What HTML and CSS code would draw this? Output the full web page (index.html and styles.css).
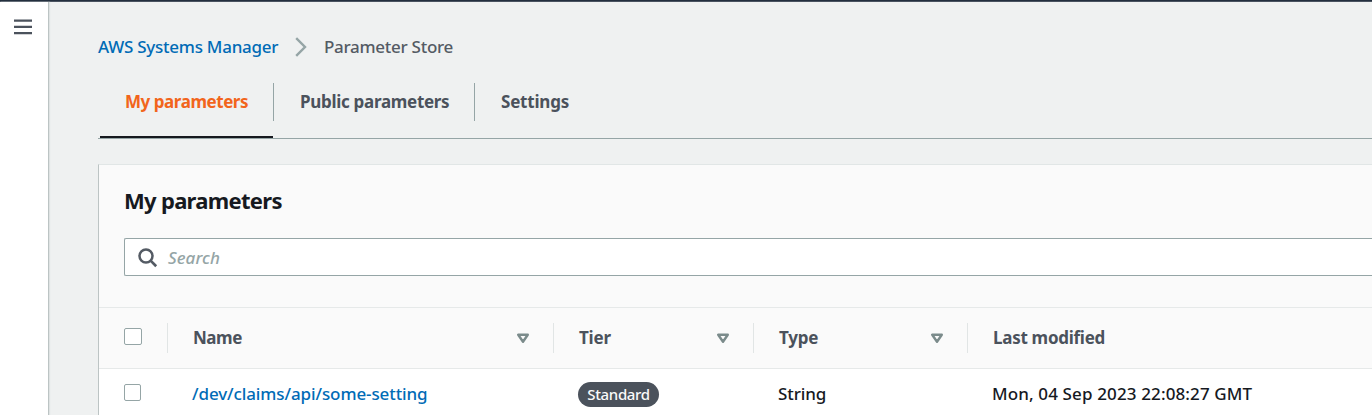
FILE: index.html
```html
<!DOCTYPE html>
<html lang="en">
<head>
<meta charset="utf-8">
<title>AWS Systems Manager - Parameter Store</title>
<link rel="stylesheet" href="styles.css">
</head>
<body>
<div class="topbar"></div>
<div class="layout">
  <aside class="rail">
    <svg class="menu" width="18" height="16" viewBox="0 0 18 16"><path d="M0 1.6h18M0 7.9h18M0 14.1h18" stroke="#4b525c" stroke-width="2.3"/></svg>
  </aside>
  <main class="main">
    <nav class="crumbs">
      <a class="crumb link t-home">AWS Systems Manager</a>
      <svg class="chevron" width="12" height="20" viewBox="0 0 12 20"><path d="M1.2 1.2 10 10 1.2 18.8" fill="none" stroke="#95a5a6" stroke-width="2.4"/></svg>
      <span class="crumb t-store">Parameter Store</span>
    </nav>
    <div class="tabs">
      <div class="tab active"><span class="t-tab1">My parameters</span></div>
      <div class="tab second"><span class="t-tab2">Public parameters</span></div>
      <div class="tab last"><span class="t-tab3">Settings</span></div>
    </div>
    <section class="card">
      <header class="card-head">
        <h2 class="title">My parameters</h2>
        <div class="search">
          <svg width="20" height="20" viewBox="0 0 20 20"><circle cx="8" cy="8" r="6.5" fill="none" stroke="#545b64" stroke-width="2.5"/><path d="m12.6 12.6 5.6 5.6" stroke="#545b64" stroke-width="2.7"/></svg>
          <span class="t-search">Search</span>
        </div>
      </header>
      <div class="row head">
        <div class="cell check"><i class="box wide"></i></div>
        <div class="cell"><span class="t-name">Name</span><svg class="sort" width="14" height="11" viewBox="0 0 14 11"><path d="M2.2 1.8h9.6L7 8.8Z" fill="none" stroke="#7b8b8b" stroke-width="2.4" stroke-linejoin="round"/></svg></div>
        <div class="cell"><span class="t-label">Tier</span><svg class="sort" width="14" height="11" viewBox="0 0 14 11"><path d="M2.2 1.8h9.6L7 8.8Z" fill="none" stroke="#7b8b8b" stroke-width="2.4" stroke-linejoin="round"/></svg></div>
        <div class="cell"><span class="t-label">Type</span><svg class="sort" width="14" height="11" viewBox="0 0 14 11"><path d="M2.2 1.8h9.6L7 8.8Z" fill="none" stroke="#7b8b8b" stroke-width="2.4" stroke-linejoin="round"/></svg></div>
        <div class="cell"><span class="t-modified">Last modified</span></div>
      </div>
      <div class="row data">
        <div class="cell check"><i class="box"></i></div>
        <div class="cell"><a class="link t-path">/dev/claims/api/some-setting</a></div>
        <div class="cell"><span class="badge">Standard</span></div>
        <div class="cell"><span class="t-string">String</span></div>
        <div class="cell"><span class="t-date">Mon, 04 Sep 2023 22:08:27 GMT</span></div>
      </div>
    </section>
  </main>
</div>
</body>
</html>
```
FILE: styles.css
```css
* { box-sizing: border-box; }
body { margin: 0; height: 415px; overflow: hidden; background: #eff1f1; color: #16191f; font-family: "Noto Sans", sans-serif; font-size: 17px; font-weight: 500; line-height: 24px; white-space: nowrap; }
svg { display: block; flex: none; }
.topbar { height: 2px; background: #232f3e; border-bottom: 1px solid #4a5360; }
.layout { display: flex; height: 413px; }
.rail { width: 49px; flex: none; background: #fff; border-right: 1px solid #bcc4c4; box-shadow: 1px 0 1px #dfe3e3; padding: 17px 0 0 14px; }
.main { flex: 1; min-width: 0; padding: 33px 0 0 49px; }
.crumbs { display: flex; align-items: center; height: 24px; color: #545b64; }
.chevron { margin: 0 17px 0 16px; }
.link { color: #006bb6; }
.t-home { width: 181px; letter-spacing: -0.25px; }
.t-store { letter-spacing: -0.28px; }
.t-tab1 { letter-spacing: -0.45px; }
.t-tab2 { letter-spacing: -0.3px; }
.t-tab3 { letter-spacing: -0.2px; }
.t-name { letter-spacing: -0.45px; padding-left: 1px; }
.t-label { padding-left: 1px; letter-spacing: -0.2px; }
.t-modified { padding-left: 1px; letter-spacing: -0.28px; }
.t-path { letter-spacing: -0.1px; }
.t-string { letter-spacing: -0.1px; }
.t-date { letter-spacing: 0.13px; }
.t-search { padding-top: 1px; letter-spacing: 0.05px; }
.tabs { display: flex; height: 58px; margin-top: 22px; padding-left: 2px; border-bottom: 1px solid #95a5a6; color: #4b525c; font-weight: 700; }
.tab { display: flex; height: 38px; margin-top: 2px; align-items: center; padding-left: 26px; border-right: 1px solid #95a5a6; width: 201px; }
.tab.active { width: 174px; padding-left: 25px; color: #f2651c; position: relative; }
.tab.active::after { content: ""; position: absolute; left: 0; right: 0; top: 53px; height: 2px; background: #16191f; }
.tab.last { border: 0; }
.card { margin-top: 25px; height: 260px; background: #fff; border-left: 1px solid #bcc4c4; border-top: 1px solid #e1e6e6; }
.card-head { height: 143px; background: #fafafa; border-bottom: 1px solid #e6e9e9; padding: 19px 0 0 25px; }
.title { margin: 0; font-size: 22px; line-height: 32px; font-weight: 700; letter-spacing: -0.7px; }
.search { display: flex; align-items: center; height: 38px; margin-top: 22px; padding: 1px 0 0 13px; gap: 10px; background: #fff; border: 1px solid #95a5a6; border-right: 0; border-radius: 2px 0 0 2px; color: #95a5a6; font-style: italic; }
.row { display: grid; grid-template-columns: 69px 386px 200px 214px 1fr; align-items: center; }
.head { height: 61px; background: #fafafa; border-bottom: 1px solid #e6e9e9; color: #4b525c; font-weight: 700; }
.data { height: 50px; }
.cell { display: flex; align-items: center; justify-content: space-between; height: 30px; padding: 0 23px 0 24px; border-right: 1px solid transparent; }
.cell.check { padding: 0 0 3px 25px; }
.head .cell { border-right-color: #e1e5e5; }
.head .cell:last-child { border: 0; }
.box { width: 17px; height: 17px; background: #fff; border: 1px solid #95a5a6; border-radius: 2px; }
.box.wide { width: 18px; }
.badge { display: flex; align-items: center; justify-content: center; width: 81px; height: 25px; border-radius: 13px; background: #4b525c; color: #fafafa; font-size: 15px; letter-spacing: -0.35px; }
```
